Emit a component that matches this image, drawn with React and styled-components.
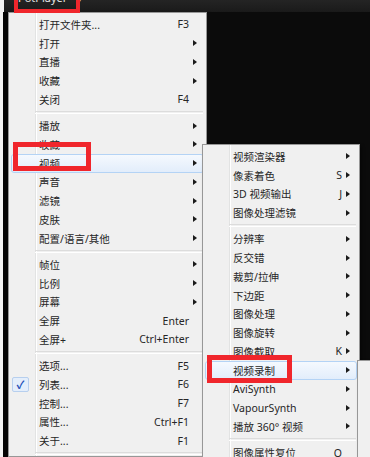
import React from "react";
import styled, { createGlobalStyle } from "styled-components";

const GlobalStyle = createGlobalStyle`
  html, body {
    margin: 0;
    padding: 0;
    background: #0b0b0b;
  }
  body {
    font-family: "Noto Sans", "Noto Sans CJK SC", sans-serif;
  }
`;

const mainItems = [
  { label: "打开文件夹...", key: "F3" },
  { label: "打开", sub: true },
  { label: "直播", sub: true },
  { label: "收藏", sub: true },
  { label: "关闭", key: "F4" },
  { sep: true },
  { label: "播放", sub: true },
  { label: "收藏", sub: true },
  { label: "视频", sub: true, active: true },
  { label: "声音", sub: true },
  { label: "滤镜", sub: true },
  { label: "皮肤", sub: true },
  { label: "配置/语言/其他", sub: true },
  { sep: true },
  { label: "帧位", sub: true },
  { label: "比例", sub: true },
  { label: "屏幕", sub: true },
  { label: "全屏", key: "Enter" },
  { label: "全屏+", key: "Ctrl+Enter" },
  { sep: true },
  { label: "选项...", key: "F5" },
  { label: "列表...", key: "F6", checked: true },
  { label: "控制...", key: "F7" },
  { label: "属性...", key: "Ctrl+F1" },
  { label: "关于...", key: "F1" },
  { sep: true },
];

const videoItems = [
  { label: "视频渲染器", sub: true },
  { label: "像素着色", key: "S", sub: true },
  { label: "3D 视频输出", key: "J", sub: true },
  { label: "图像处理滤镜", sub: true },
  { sep: true },
  { label: "分辨率", sub: true },
  { label: "反交错", sub: true },
  { label: "裁剪/拉伸", sub: true },
  { label: "下边距", sub: true },
  { label: "图像处理", sub: true },
  { label: "图像旋转", sub: true },
  { label: "图像截取", key: "K", sub: true },
  { label: "视频录制", sub: true, active: true },
  { label: "AviSynth", sub: true },
  { label: "VapourSynth", sub: true },
  { label: "播放 360° 视频", sub: true },
  { sep: true },
  { label: "图像属性复位", key: "O" },
];

const Screen = styled.div`
  position: relative;
  width: 370px;
  height: 457px;
  overflow: hidden;
  display: flex;
  flex-direction: column;
  background: #0b0b0b;
`;

const TopBar = styled.div`
  height: 12px;
  flex: none;
  display: flex;
  align-items: flex-start;
  background: linear-gradient(#242424, #1a1a1a);
  border-left: 4px solid #f2f2f2;
  padding-left: 14px;
  overflow: hidden;
`;

const Title = styled.span`
  margin-top: -8px;
  font-size: 11px;
  line-height: 12px;
  color: #e6e6e6;
  white-space: nowrap;
  span {
    margin-left: 8px;
    font-size: 8px;
  }
`;

const Body = styled.div`
  flex: 1;
  display: flex;
  min-height: 0;
`;

const WindowEdge = styled.div`
  width: 8px;
  flex: none;
  background: linear-gradient(to right, #f4f4f4 3px, #050505 3px);
`;

const Menu = styled.div`
  width: ${(p) => p.$width}px;
  flex: none;
  box-sizing: border-box;
  border: 1px solid #979797;
  padding: 2px 2px 0;
  background: linear-gradient(
      to right,
      transparent 26px,
      #e2e3e3 26px,
      #e2e3e3 27px,
      #ffffff 27px,
      #ffffff 28px,
      transparent 28px
    ),
    #f0f0f0;
  box-shadow: 2px 2px 3px rgba(0, 0, 0, 0.35);
  overflow: hidden;
`;

const Popup = styled(Menu)`
  position: absolute;
  left: ${(p) => p.$left}px;
  top: ${(p) => p.$top}px;
  height: ${(p) => p.$height}px;
`;

const VideoArea = styled.div`
  flex: 1;
  background: #0b0b0b;
`;

const Row = styled.div`
  height: 18.75px;
  box-sizing: border-box;
  display: grid;
  grid-template-columns: 27px 1fr auto 14px;
  align-items: center;
  font-size: 10.5px;
  color: #262626;
  white-space: nowrap;
  border: 1px solid ${(p) => (p.$active ? "#b4d3f5" : "transparent")};
  border-radius: 3px;
  background: ${(p) =>
    p.$active ? "linear-gradient(#f5f9fe, #e2edfb)" : "transparent"};
`;

const Gutter = styled.div`
  display: flex;
  align-items: center;
  height: 100%;
`;

const Check = styled.span`
  width: 17px;
  height: 15px;
  box-sizing: border-box;
  border: 1px solid #b7cfee;
  border-radius: 2px;
  background: #e4eefb;
  color: #1d4fb8;
  font-size: 11px;
  font-weight: bold;
  line-height: 13px;
  text-align: center;
`;

const Label = styled.span``;

const Shortcut = styled.span`
  text-align: right;
`;

const Arrow = styled.span`
  justify-self: start;
  margin-left: 4px;
  width: 0;
  height: 0;
  border-top: 3.5px solid transparent;
  border-bottom: 3.5px solid transparent;
  border-left: 4px solid ${(p) => (p.$show ? "#1a1a1a" : "transparent")};
`;

const Separator = styled.div`
  height: 7.5px;
  display: flex;
  align-items: center;
  margin: 0 1px 0 24px;
  &::after {
    content: "";
    flex: 1;
    height: 1px;
    border-top: 1px solid #dcdcdc;
    border-bottom: 1px solid #ffffff;
  }
`;

const Marker = styled.div`
  position: absolute;
  left: ${(p) => p.$left}px;
  top: ${(p) => p.$top}px;
  width: ${(p) => p.$width}px;
  height: ${(p) => p.$height}px;
  box-sizing: border-box;
  border: ${(p) => p.$thick}px solid #f0262c;
  pointer-events: none;
`;

function MenuList({ items }) {
  return items.map((it, i) =>
    it.sep ? (
      <Separator key={i} />
    ) : (
      <Row key={i} $active={it.active}>
        <Gutter>{it.checked && <Check>✓</Check>}</Gutter>
        <Label>{it.label}</Label>
        <Shortcut>{it.key}</Shortcut>
        <Arrow $show={it.sub} />
      </Row>
    )
  );
}

export default function App() {
  return (
    <>
      <GlobalStyle />
      <Screen>
        <TopBar>
          <Title>
            PotPlayer<span>▼</span>
          </Title>
        </TopBar>
        <Body>
          <WindowEdge />
          <Menu $width={199}>
            <MenuList items={mainItems} />
          </Menu>
          <VideoArea />
        </Body>

        <Popup $width={158} $left={202} $top={144} $height={330}>
          <MenuList items={videoItems} />
        </Popup>
        <Popup $width={40} $left={357} $top={360} $height={120} />

        <Marker $left={14} $top={-5} $width={66} $height={18} $thick={4} />
        <Marker $left={13} $top={142} $width={78} $height={29} $thick={5} />
        <Marker $left={207} $top={355} $width={85} $height={28} $thick={5} />
      </Screen>
    </>
  );
}
